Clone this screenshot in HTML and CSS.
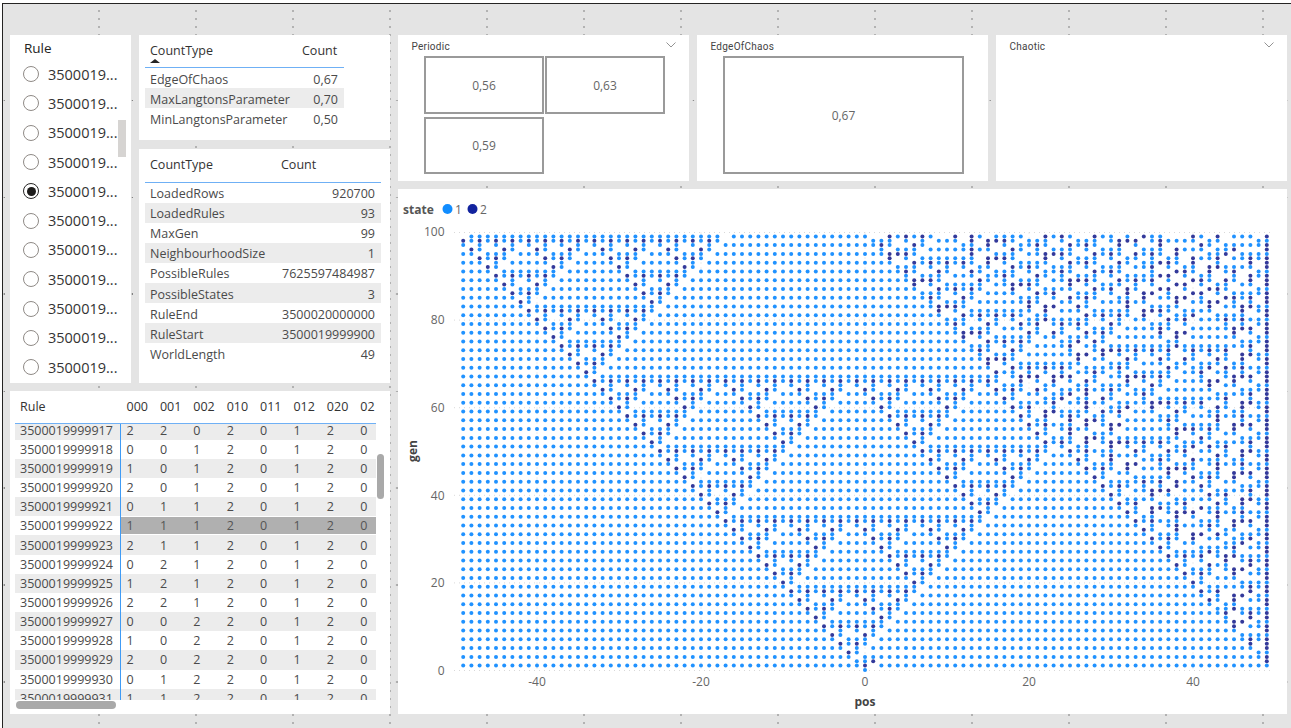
FILE: index.html
```html
<!DOCTYPE html>
<html lang="en">
<head>
<meta charset="utf-8">
<title>Cellular automata report</title>
<link rel="stylesheet" href="styles.css">
</head>
<body>
<main class="canvas">
  <div class="board">
    <div class="left">
      <div class="left-top">
        <section class="panel slicer">
          <h2 class="slicer-title">Rule</h2>
          <ul class="radio-list">
            <li class="radio-item"><span class="radio"></span><span class="radio-text">3500019...</span></li>
            <li class="radio-item"><span class="radio"></span><span class="radio-text">3500019...</span></li>
            <li class="radio-item"><span class="radio"></span><span class="radio-text">3500019...</span></li>
            <li class="radio-item"><span class="radio"></span><span class="radio-text">3500019...</span></li>
            <li class="radio-item"><span class="radio radio-on"></span><span class="radio-text">3500019...</span></li>
            <li class="radio-item"><span class="radio"></span><span class="radio-text">3500019...</span></li>
            <li class="radio-item"><span class="radio"></span><span class="radio-text">3500019...</span></li>
            <li class="radio-item"><span class="radio"></span><span class="radio-text">3500019...</span></li>
            <li class="radio-item"><span class="radio"></span><span class="radio-text">3500019...</span></li>
            <li class="radio-item"><span class="radio"></span><span class="radio-text">3500019...</span></li>
            <li class="radio-item"><span class="radio"></span><span class="radio-text">3500019...</span></li>
          </ul>
          <div class="slicer-thumb"></div>
        </section>
        <div class="table-stack">
          <section class="panel kv kv-small">
            <div class="kv-head"><span class="kv-key">CountType</span><span class="kv-val-head">Count</span><span class="sort-arrow"></span></div>
            <div class="kv-row"><span class="kv-key">EdgeOfChaos</span><span class="kv-val">0,67</span></div>
            <div class="kv-row kv-alt"><span class="kv-key">MaxLangtonsParameter</span><span class="kv-val">0,70</span></div>
            <div class="kv-row"><span class="kv-key">MinLangtonsParameter</span><span class="kv-val">0,50</span></div>
          </section>
          <section class="panel kv kv-large">
            <div class="kv-head"><span class="kv-key">CountType</span><span class="kv-val-head">Count</span></div>
            <div class="kv-row"><span class="kv-key">LoadedRows</span><span class="kv-val">920700</span></div>
            <div class="kv-row kv-alt"><span class="kv-key">LoadedRules</span><span class="kv-val">93</span></div>
            <div class="kv-row"><span class="kv-key">MaxGen</span><span class="kv-val">99</span></div>
            <div class="kv-row kv-alt"><span class="kv-key">NeighbourhoodSize</span><span class="kv-val">1</span></div>
            <div class="kv-row"><span class="kv-key">PossibleRules</span><span class="kv-val">7625597484987</span></div>
            <div class="kv-row kv-alt"><span class="kv-key">PossibleStates</span><span class="kv-val">3</span></div>
            <div class="kv-row"><span class="kv-key">RuleEnd</span><span class="kv-val">3500020000000</span></div>
            <div class="kv-row kv-alt"><span class="kv-key">RuleStart</span><span class="kv-val">3500019999900</span></div>
            <div class="kv-row"><span class="kv-key">WorldLength</span><span class="kv-val">49</span></div>
          </section>
        </div>
      </div>
      <section class="panel matrix">
        <div class="m-head">
          <span class="m-rule">Rule</span><span class="m-c">000</span><span class="m-c">001</span><span class="m-c">002</span><span class="m-c">010</span><span class="m-c">011</span><span class="m-c">012</span><span class="m-c">020</span><span class="m-c m-last">021</span>
        </div>
        <div class="m-body">
          <div class="m-row m-alt"><span class="m-rule">3500019999917</span><span class="m-c">2</span><span class="m-c">2</span><span class="m-c">0</span><span class="m-c">2</span><span class="m-c">0</span><span class="m-c">1</span><span class="m-c">2</span><span class="m-c">0</span></div>
          <div class="m-row"><span class="m-rule">3500019999918</span><span class="m-c">0</span><span class="m-c">0</span><span class="m-c">1</span><span class="m-c">2</span><span class="m-c">0</span><span class="m-c">1</span><span class="m-c">2</span><span class="m-c">0</span></div>
          <div class="m-row m-alt"><span class="m-rule">3500019999919</span><span class="m-c">1</span><span class="m-c">0</span><span class="m-c">1</span><span class="m-c">2</span><span class="m-c">0</span><span class="m-c">1</span><span class="m-c">2</span><span class="m-c">0</span></div>
          <div class="m-row"><span class="m-rule">3500019999920</span><span class="m-c">2</span><span class="m-c">0</span><span class="m-c">1</span><span class="m-c">2</span><span class="m-c">0</span><span class="m-c">1</span><span class="m-c">2</span><span class="m-c">0</span></div>
          <div class="m-row m-alt"><span class="m-rule">3500019999921</span><span class="m-c">0</span><span class="m-c">1</span><span class="m-c">1</span><span class="m-c">2</span><span class="m-c">0</span><span class="m-c">1</span><span class="m-c">2</span><span class="m-c">0</span></div>
          <div class="m-row m-sel"><span class="m-rule">3500019999922</span><span class="m-c">1</span><span class="m-c">1</span><span class="m-c">1</span><span class="m-c">2</span><span class="m-c">0</span><span class="m-c">1</span><span class="m-c">2</span><span class="m-c">0</span></div>
          <div class="m-row m-alt"><span class="m-rule">3500019999923</span><span class="m-c">2</span><span class="m-c">1</span><span class="m-c">1</span><span class="m-c">2</span><span class="m-c">0</span><span class="m-c">1</span><span class="m-c">2</span><span class="m-c">0</span></div>
          <div class="m-row"><span class="m-rule">3500019999924</span><span class="m-c">0</span><span class="m-c">2</span><span class="m-c">1</span><span class="m-c">2</span><span class="m-c">0</span><span class="m-c">1</span><span class="m-c">2</span><span class="m-c">0</span></div>
          <div class="m-row m-alt"><span class="m-rule">3500019999925</span><span class="m-c">1</span><span class="m-c">2</span><span class="m-c">1</span><span class="m-c">2</span><span class="m-c">0</span><span class="m-c">1</span><span class="m-c">2</span><span class="m-c">0</span></div>
          <div class="m-row"><span class="m-rule">3500019999926</span><span class="m-c">2</span><span class="m-c">2</span><span class="m-c">1</span><span class="m-c">2</span><span class="m-c">0</span><span class="m-c">1</span><span class="m-c">2</span><span class="m-c">0</span></div>
          <div class="m-row m-alt"><span class="m-rule">3500019999927</span><span class="m-c">0</span><span class="m-c">0</span><span class="m-c">2</span><span class="m-c">2</span><span class="m-c">0</span><span class="m-c">1</span><span class="m-c">2</span><span class="m-c">0</span></div>
          <div class="m-row"><span class="m-rule">3500019999928</span><span class="m-c">1</span><span class="m-c">0</span><span class="m-c">2</span><span class="m-c">2</span><span class="m-c">0</span><span class="m-c">1</span><span class="m-c">2</span><span class="m-c">0</span></div>
          <div class="m-row m-alt"><span class="m-rule">3500019999929</span><span class="m-c">2</span><span class="m-c">0</span><span class="m-c">2</span><span class="m-c">2</span><span class="m-c">0</span><span class="m-c">1</span><span class="m-c">2</span><span class="m-c">0</span></div>
          <div class="m-row"><span class="m-rule">3500019999930</span><span class="m-c">0</span><span class="m-c">1</span><span class="m-c">2</span><span class="m-c">2</span><span class="m-c">0</span><span class="m-c">1</span><span class="m-c">2</span><span class="m-c">0</span></div>
          <div class="m-row m-alt"><span class="m-rule">3500019999931</span><span class="m-c">1</span><span class="m-c">1</span><span class="m-c">2</span><span class="m-c">2</span><span class="m-c">0</span><span class="m-c">1</span><span class="m-c">2</span><span class="m-c">0</span></div>
        </div>
        <div class="m-vthumb"></div>
        <div class="m-hthumb"></div>
      </section>
    </div>
    <div class="right">
      <div class="cards">
        <section class="panel card">
          <div class="card-head"><span class="card-title">Periodic</span>
            <svg class="chevron" viewBox="0 0 10 6"><path d="M.5.5 5 5 9.5.5"/></svg></div>
          <div class="tiles">
            <div class="tile">0,56</div>
            <div class="tile">0,63</div>
            <div class="tile tile-low">0,59</div>
          </div>
        </section>
        <section class="panel card">
          <div class="card-head"><span class="card-title">EdgeOfChaos</span></div>
          <div class="tiles"><div class="tile tile-full">0,67</div></div>
        </section>
        <section class="panel card">
          <div class="card-head"><span class="card-title">Chaotic</span>
            <svg class="chevron" viewBox="0 0 10 6"><path d="M.5.5 5 5 9.5.5"/></svg></div>
        </section>
      </div>
      <section class="panel chart">
        <svg id="plot" class="plot" viewBox="398 189 889 525">
          <g id="grid"></g>
          <g id="dots"></g>
          <text class="legend-title" x="403" y="213.5">state</text>
          <circle class="s1" cx="447.5" cy="209" r="5"></circle>
          <text class="legend-item" x="455" y="214">1</text>
          <circle class="s2" cx="472.5" cy="209" r="5"></circle>
          <text class="legend-item" x="480" y="214">2</text>
          <text class="tick end" x="444.5" y="236">100</text>
          <text class="tick end" x="444.5" y="324">80</text>
          <text class="tick end" x="444.5" y="412">60</text>
          <text class="tick end" x="444.5" y="500">40</text>
          <text class="tick end" x="444.5" y="587">20</text>
          <text class="tick end" x="444.5" y="675">0</text>
          <text class="tick mid" x="537" y="686">-40</text>
          <text class="tick mid" x="701" y="686">-20</text>
          <text class="tick mid" x="865" y="686">0</text>
          <text class="tick mid" x="1029" y="686">20</text>
          <text class="tick mid" x="1193" y="686">40</text>
          <text class="axis-title mid" x="865" y="706">pos</text>
          <text class="axis-title mid" transform="translate(416.5 451) rotate(-90)">gen</text>
        </svg>
      </section>
    </div>
  </div>
</main>
<script src="chart.js"></script>
</body>
</html>
```
FILE: styles.css
```css
* { box-sizing: border-box; }
html, body { margin: 0; height: 100%; background: #fff; overflow: hidden; }
body { font-family: "Open Sans", "Noto Sans", sans-serif; color: #333; }
.canvas {
  margin: 3px 0 0 2px;
  height: 725px;
  border-top: 1px solid #252423;
  border-left: 1px solid #252423;
  padding: 31px 0 0 7px;
  background-color: #e4e4e4;
  background-image:
    radial-gradient(circle at 1px 1px, #444 .5px, transparent .8px),
    radial-gradient(circle at 1px 1px, #444 .5px, transparent .8px);
  background-size: 97px 8px, 8.03px 97px;
  background-position: 95px 6px, 0 95px;
}
.board { display: flex; gap: 8px; }
.panel { background: #fff; position: relative; }
.left { width: 380px; display: flex; flex-direction: column; gap: 8px; }
.left-top { display: flex; gap: 8px; height: 348px; }
.right { width: 889px; display: flex; flex-direction: column; gap: 8.5px; }

/* slicer */
.slicer { width: 121px; padding: 5px 0 0 14px; overflow: hidden; }
.slicer-title { margin: 0; font-size: 13.5px; font-weight: 400; line-height: 16px; color: #252423; }
.radio-list { list-style: none; margin: 3.5px 0 0; padding: 0; }
.radio-item { display: flex; align-items: center; height: 29.3px; }
.radio { width: 16px; height: 16px; border-radius: 50%; border: 1px solid #8f8a86; flex: none; margin-left: -1px; position: relative; }
.radio-on { border: 1.5px solid #252423; }
.radio-on::after { content: ""; position: absolute; inset: 2.5px; border-radius: 50%; background: #1d1c1b; }
.radio-text { margin-left: 9px; font-size: 14.5px; color: #333; white-space: nowrap; }
.slicer-thumb { position: absolute; left: 108px; top: 85px; width: 8px; height: 37px; background: #d6d4d2; }

/* key/value tables */
.table-stack { width: 251px; display: flex; flex-direction: column; gap: 9px; }
.kv { padding-left: 6px; font-size: 12.5px; }
.kv-small { height: 105px; }
.kv-large { height: 234px; }
.kv-small .kv-head, .kv-small .kv-row { width: 199px; }
.kv-large .kv-head, .kv-large .kv-row { width: 236px; }
.kv-head { display: flex; height: 33px; align-items: center; border-bottom: 1px solid #6fb0f5; padding: 0 0 2px 5px; color: #333; position: relative; }
.kv-large .kv-head { height: 33.5px; }
.kv-head .kv-key { width: 152px; }
.kv-large .kv-head .kv-key { width: 131px; }
.kv-row { display: flex; height: 20.12px; align-items: center; padding: 2px 6px 0 5px; color: #4a4a4a; white-space: nowrap; }
.kv-row .kv-key { flex: 1; }
.kv-alt { background: #ececec; }
.sort-arrow { position: absolute; left: 5px; top: 24px; width: 0; height: 0; border: 5px solid transparent; border-top: 0; border-bottom: 4px solid #252423; }

/* matrix */
.matrix { height: 323px; font-size: 12.5px; color: #4a4a4a; overflow: hidden; }
.m-head { display: flex; height: 33px; width: 361px; margin-left: 5px; padding-bottom: 2px; align-items: center; border-bottom: 1px solid #6fb0f5; color: #333; overflow: hidden; position: relative; z-index: 1; background: #fff; }
.m-body { position: absolute; left: 5px; top: 29.5px; width: 361px; height: 279.5px; overflow: hidden; }
.m-row { display: flex; height: 19.17px; align-items: center; }
.m-rule { width: 105.5px; flex: none; padding-left: 5px; white-space: nowrap; }
.m-c { width: 33.4px; flex: none; padding-left: 6px; white-space: nowrap; }
.m-last { width: 21px; overflow: hidden; flex: none; }
.m-alt { background: #ececec; }
.m-row .m-rule { background: inherit; border-right: 1.5px solid #3f9bf5; height: 100%; display: flex; align-items: center; }
.m-sel .m-c { background: #b0b0b0; color: #555; }
.m-vthumb { position: absolute; left: 367px; top: 62.5px; width: 7px; height: 45px; border-radius: 4px; background: #a9a9a9; }
.m-hthumb { position: absolute; left: 6px; top: 309.5px; width: 100px; height: 8px; border-radius: 4px; background: #a9a9a9; }

/* cards */
.cards { display: flex; gap: 8px; height: 145.5px; }
.card { width: 291px; padding: 0; }
.card-head { height: 21px; display: flex; align-items: center; justify-content: space-between; padding: 2px 13px 0 13.5px; }
.card-title { font-family: "Roboto", sans-serif; font-size: 10px; letter-spacing: .25px; color: #444; }
.chevron { width: 10px; height: 6px; fill: none; stroke: #777; stroke-width: .8; margin-top: -4px; }
.tiles { display: grid; grid-template-columns: 120px 120px; grid-auto-rows: 57.5px; gap: 3px 1px; margin-left: 26px; }
.tile { border: 2px solid #9a9a9a; display: flex; align-items: center; justify-content: center; padding-top: 2px; font-size: 12px; color: #666; }
.tile-low { padding-top: 1px; }
.tile-full { grid-column: 1 / 3; width: 241px; height: 118px; padding-top: 0; }

/* chart */
.chart { height: 525px; }
.plot { display: block; width: 889px; height: 525px; font-family: "Open Sans", "Noto Sans", sans-serif; }
.s1 { fill: #118dff; }
.s2 { fill: #12239e; }
.d1 { fill: #2092ff; }
.d2 { fill: #33399a; }
.gridline { stroke: #d9d9d9; stroke-width: 1; stroke-dasharray: 1 4; fill: none; }
.legend-title { font-size: 12px; font-weight: 700; fill: #555; }
.legend-item { font-size: 12px; fill: #666; }
.tick { font-size: 12px; fill: #666; }
.axis-title { font-size: 12px; font-weight: 700; fill: #444; }
.end { text-anchor: end; }
.mid { text-anchor: middle; }
```
FILE: chart.js
```js
// Cellular automaton behind the scatter chart: rule 3500019999922, 3 states, radius 1.
(function () {
  var NS = "http://www.w3.org/2000/svg";
  var RULE = 3500019999922n;
  var table = [];
  for (var i = 0, r = RULE; i < 27; i++) { table.push(Number(r % 3n)); r = r / 3n; }

  var N = 99, GENS = 100;
  var row = new Array(N).fill(0);
  row[49] = 1;
  var rows = [row];
  for (var g = 1; g < GENS; g++) {
    var prev = rows[g - 1], next = [];
    for (var c = 0; c < N; c++) {
      var a = c > 0 ? prev[c - 1] : 0, b = prev[c], d = c < N - 1 ? prev[c + 1] : 0;
      next.push(table[a * 9 + b * 3 + d]);
    }
    rows.push(next);
  }

  var dots = document.getElementById("dots");
  var grid = document.getElementById("grid");
  function line(x1, y1, x2, y2) {
    var l = document.createElementNS(NS, "line");
    l.setAttribute("class", "gridline");
    l.setAttribute("x1", x1); l.setAttribute("y1", y1);
    l.setAttribute("x2", x2); l.setAttribute("y2", y2);
    grid.appendChild(l);
  }
  [0, 20, 40, 60, 80, 100].forEach(function (v) {
    var y = 670.5 - 4.38 * v;
    line(454, y, 1270, y);
  });
  [-40, -20, 0, 20, 40].forEach(function (v) {
    var x = 865 + 8.2 * v;
    line(x, 232.5, x, 670.5);
  });

  rows.forEach(function (cells, gen) {
    cells.forEach(function (s, idx) {
      if (!s) return;
      var o = document.createElementNS(NS, "circle");
      o.setAttribute("class", "d" + s);
      o.setAttribute("cx", (865 + 8.2 * (idx - 49)).toFixed(1));
      o.setAttribute("cy", (670 - 4.38 * gen).toFixed(1));
      o.setAttribute("r", "2");
      dots.appendChild(o);
    });
  });
})();
```
